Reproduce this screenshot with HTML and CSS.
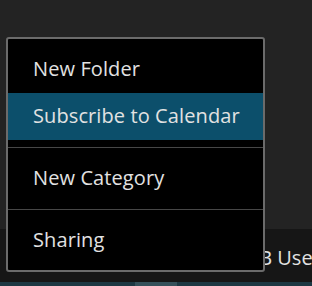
FILE: index.html
```html
<!DOCTYPE html>
<html lang="en">
<head>
   <meta charset="UTF-8">
   <meta name="viewport" content="width=device-width, initial-scale=1.0">
   <title>Folder menu</title>
   <link rel="stylesheet" href="styles.css">
</head>
<body>
   <div class="page">
      <div class="main"></div>
      <div class="status">
         <span class="usage">5 GB Used</span>
      </div>
      <div class="strip">
         <div class="strip-part"></div>
         <div class="strip-part light"></div>
         <div class="strip-part"></div>
      </div>
   </div>

   <!-- context menu -->
   <div class="menu">
      <div class="menu-item">New Folder</div>
      <div class="menu-item active">Subscribe to Calendar</div>
      <div class="menu-sep"></div>
      <div class="menu-item">New Category</div>
      <div class="menu-sep"></div>
      <div class="menu-item">Sharing</div>
   </div>
</body>
</html>
```

FILE: styles.css
```css
body {
   margin: 0;
   background: #232323;
   font-family: "Open Sans", "Noto Sans", sans-serif;
   color: #e2e2e2;
}

.page {
   width: 312px;
   height: 286px;
   display: flex;
   flex-direction: column;
   overflow: hidden;
}

.main {
   height: 229px;
   background: #232323;
}

.status {
   height: 53px;
   background: #161616;
   display: flex;
   align-items: center;
   padding-left: 228px;
   white-space: nowrap;
   font-size: 20px;
}

.usage {
   padding-top: 4px;
}

.strip {
   flex: 1;
   display: flex;
   background: #1d3843;
}

.strip-part {
   width: 217px;
}

.strip-part.light {
   width: 66px;
   background: #35505a;
}

.menu {
   position: absolute;
   left: 6px;
   top: 37px;
   width: 255px;
   border: 2px solid #6b6b6b;
   border-radius: 3px;
   background: #000;
   padding: 7px 0 6px;
}

.menu-item {
   height: 47px;
   line-height: 45px;
   padding-left: 25px;
   font-size: 20px;
   letter-spacing: 0.1px;
   color: #e2e2e2;
   white-space: nowrap;
}

.menu-item.active {
   background: #0c4f6b;
}

.menu-sep {
   height: 1px;
   margin: 7px 0;
   background: #474747;
}
```
